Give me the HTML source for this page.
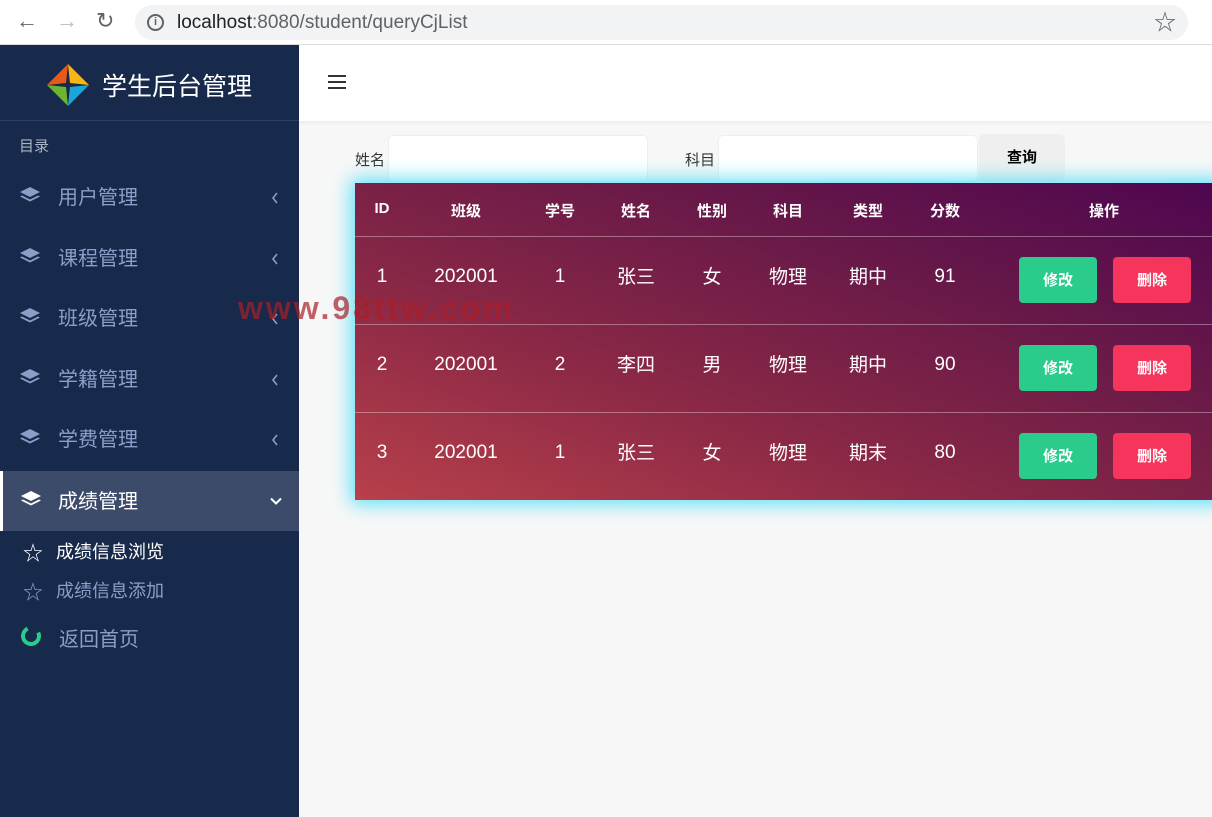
<!DOCTYPE html>
<html><head><meta charset="utf-8"><style>
*{margin:0;padding:0;box-sizing:border-box}
body{width:1212px;height:817px;overflow:hidden;background:#f7f7f7;font-family:"Liberation Sans","Noto Sans CJK SC",sans-serif;position:relative}
.bar{position:absolute;left:0;top:0;width:1212px;height:45px;background:#fff;border-bottom:1px solid #ddd}
.url{position:absolute;left:135px;top:5px;width:1053px;height:35px;border-radius:18px;background:#f1f3f4;font-size:19px;color:#202124;line-height:35px;padding-left:42px}
.url span{color:#5f6368}
.side{position:absolute;left:0;top:45px;width:299px;height:772px;background:#182a4b}
.logo{height:76px;border-bottom:1px solid #2e4064;position:relative}
.logo .t{position:absolute;left:102px;top:22px;color:#fff;font-size:25px}
.mulu{position:absolute;left:19px;top:90px;color:#aab4c6;font-size:15px}
.item{position:absolute;left:0;width:299px;height:60px;color:#8a9fc8;font-size:20px}
.item .tx{position:absolute;left:58px;top:14px}
.item .ar{position:absolute;left:271px;top:25px}
.item svg.l{position:absolute;left:20px;top:20px}
.act{background:#3b4b69;border-left:3px solid #fff;color:#fff}
.top{position:absolute;left:299px;top:45px;width:913px;height:76px;background:#fff;box-shadow:0 2px 4px rgba(0,0,0,.05)}
.lab{position:absolute;top:149px;font-size:15px;color:#333}
.inp{position:absolute;top:135px;width:260px;height:47px;background:#fff;border:1px solid #eee;border-radius:5px}
.btn{position:absolute;left:979px;top:134px;width:86px;height:48px;background:#efefef;border-radius:5px;font-size:15px;font-weight:bold;text-align:center;line-height:48px}
.tbl{position:absolute;left:355px;top:183px;width:880px;height:317px;background:linear-gradient(20deg,#b8404a 0%,#8a2846 35%,#6a1a48 65%,#4d0550 100%);box-shadow:0 0 18px 4px #5ee0f7}
.c{position:absolute;color:#fff;text-align:center;transform:translateX(-50%)}
.h{top:17px;font-size:15px;font-weight:bold}
.line{position:absolute;left:0;width:880px;height:1px;background:rgba(255,255,255,.35)}
.d{font-size:19px;top:0}
.n{top:4px}
.b{position:absolute;width:78px;height:46px;border-radius:4px;color:#fff;font-size:15px;font-weight:bold;text-align:center;line-height:48px}
.g{background:#2bcc8b;left:664px}.r{background:#f5355b;left:758px}
.wm{position:absolute;left:238px;top:290px;font-size:32px;font-weight:bold;color:rgba(170,30,40,.7);letter-spacing:3px}
</style></head><body>
<div class="bar">
<div style="position:absolute;left:16px;top:8px;font-size:22px;color:#5f6368">←</div>
<div style="position:absolute;left:56px;top:8px;font-size:22px;color:#bbb">→</div>
<div style="position:absolute;left:96px;top:8px;font-size:22px;color:#5f6368">↻</div>
<div class="url"><div style="position:absolute;left:12px;top:9px;width:17px;height:17px;border:2px solid #5f6368;border-radius:50%;font-size:11px;line-height:13px;text-align:center;font-weight:bold;color:#5f6368">i</div>localhost<span>:8080/student/queryCjList</span><div style="position:absolute;right:12px;top:0;font-size:22px;color:#5f6368">☆</div></div>
</div>
<div class="side">
<div class="logo">
<svg style="position:absolute;left:47px;top:19px" width="42" height="42" viewBox="0 0 42 42"><path d="M21 0L19 19L0 21Z" fill="#e85a1a"/><path d="M21 0L23 19L42 21Z" fill="#f7b614"/><path d="M0 21L19 23L21 42Z" fill="#6cb52c"/><path d="M42 21L23 23L21 42Z" fill="#1aa7d8"/></svg>
<div class="t">学生后台管理</div></div>
<div class="mulu">目录</div>
<svg width="0" height="0" style="position:absolute"><defs><symbol id="ly" viewBox="0 0 20 18"><path d="M10 0L20 5L10 10L0 5Z" fill="currentColor"/><path d="M2 8.5L10 12.5L18 8.5L20 9.5L10 14.5L0 9.5Z" fill="currentColor"/></symbol>
<symbol id="lt" viewBox="0 0 8 12"><path d="M6 1L2 6L6 11" fill="none" stroke="currentColor" stroke-width="1.6"/></symbol></defs></svg>
<div class="item" style="top:122px"><svg class="l" width="20" height="18"><use href="#ly"/></svg><span class="tx">用户管理</span><svg class="ar" width="8" height="12"><use href="#lt"/></svg></div>
<div class="item" style="top:183px"><svg class="l" width="20" height="18"><use href="#ly"/></svg><span class="tx">课程管理</span><svg class="ar" width="8" height="12"><use href="#lt"/></svg></div>
<div class="item" style="top:243px"><svg class="l" width="20" height="18"><use href="#ly"/></svg><span class="tx">班级管理</span><svg class="ar" width="8" height="12"><use href="#lt"/></svg></div>
<div class="item" style="top:304px"><svg class="l" width="20" height="18"><use href="#ly"/></svg><span class="tx">学籍管理</span><svg class="ar" width="8" height="12"><use href="#lt"/></svg></div>
<div class="item" style="top:364px"><svg class="l" width="20" height="18"><use href="#ly"/></svg><span class="tx">学费管理</span><svg class="ar" width="8" height="12"><use href="#lt"/></svg></div>
<div class="item act" style="top:426px"><svg class="l" width="20" height="18" style="left:18px"><use href="#ly"/></svg><span class="tx" style="left:55px">成绩管理</span><svg style="position:absolute;left:267px;top:26px" width="12" height="8" viewBox="0 0 12 8"><path d="M1 1.5L6 6.5L11 1.5" fill="none" stroke="#fff" stroke-width="2"/></svg></div>
<div style="position:absolute;left:23px;top:492px;color:#fff;font-size:20px">☆</div><div style="position:absolute;left:56px;top:493px;color:#fff;font-size:18px">成绩信息浏览</div>
<div style="position:absolute;left:23px;top:531px;color:#8a9fc8;font-size:20px">☆</div><div style="position:absolute;left:56px;top:532px;color:#8a9fc8;font-size:18px">成绩信息添加</div>
<div style="position:absolute;left:21px;top:581px;width:20px;height:20px;border:4px solid #2bcc8b;border-radius:50%;border-top-color:transparent;transform:rotate(20deg)"></div>
<div style="position:absolute;left:59px;top:578px;color:#8a9fc8;font-size:20px">返回首页</div>
</div>
<div class="top"><div style="position:absolute;left:29px;top:30px;width:18px;height:2px;background:#333;box-shadow:0 6px 0 #333,0 12px 0 #333"></div></div>
<div class="lab" style="left:355px">姓名</div><div class="inp" style="left:388px"></div>
<div class="lab" style="left:685px">科目</div><div class="inp" style="left:718px"></div>
<div class="btn">查询</div>
<div class="tbl">
<div class="c h" style="left:27px">ID</div><div class="c h" style="left:111px">班级</div><div class="c h" style="left:205px">学号</div><div class="c h" style="left:281px">姓名</div><div class="c h" style="left:357px">性别</div><div class="c h" style="left:433px">科目</div><div class="c h" style="left:513px">类型</div><div class="c h" style="left:590px">分数</div><div class="c h" style="left:749px">操作</div>
<div class="line" style="top:53px"></div><div class="line" style="top:141px"></div><div class="line" style="top:229px"></div>
<div style="position:absolute;top:79px;left:0;width:880px">
<div class="c d n" style="left:27px">1</div><div class="c d n" style="left:111px">202001</div><div class="c d n" style="left:205px">1</div><div class="c d" style="left:281px">张三</div><div class="c d" style="left:357px">女</div><div class="c d" style="left:433px">物理</div><div class="c d" style="left:513px">期中</div><div class="c d n" style="left:590px">91</div></div>
<div class="b g" style="top:74px">修改</div><div class="b r" style="top:74px">删除</div>
<div style="position:absolute;top:167px;left:0;width:880px">
<div class="c d n" style="left:27px">2</div><div class="c d n" style="left:111px">202001</div><div class="c d n" style="left:205px">2</div><div class="c d" style="left:281px">李四</div><div class="c d" style="left:357px">男</div><div class="c d" style="left:433px">物理</div><div class="c d" style="left:513px">期中</div><div class="c d n" style="left:590px">90</div></div>
<div class="b g" style="top:162px">修改</div><div class="b r" style="top:162px">删除</div>
<div style="position:absolute;top:255px;left:0;width:880px">
<div class="c d n" style="left:27px">3</div><div class="c d n" style="left:111px">202001</div><div class="c d n" style="left:205px">1</div><div class="c d" style="left:281px">张三</div><div class="c d" style="left:357px">女</div><div class="c d" style="left:433px">物理</div><div class="c d" style="left:513px">期末</div><div class="c d n" style="left:590px">80</div></div>
<div class="b g" style="top:250px">修改</div><div class="b r" style="top:250px">删除</div>
</div>
<div class="wm">www.98ttw.com</div>
</body></html>
